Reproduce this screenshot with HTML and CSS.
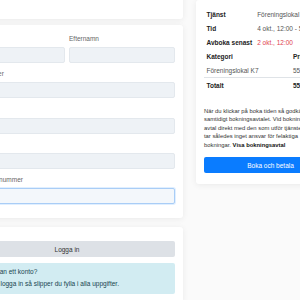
FILE: index.html
```html
<!DOCTYPE html>
<html lang="sv">
  <head>
    <meta charset="UTF-8" />
    <meta name="viewport" content="width=device-width, initial-scale=1.0" />
    <title>Boka lokal</title>
    <link rel="stylesheet" href="styles.css">
  </head>
  <body>
    <div class="page">
      <div class="main">
        <div class="card card-top"></div>

        <!-- Kontaktuppgifter -->
        <div class="card form-card">
          <div class="row-2">
            <div class="field">
              <label>Förnamn</label>
              <input class="input" type="text" />
            </div>
            <div class="field">
              <label>Efternamn</label>
              <input class="input" type="text" />
            </div>
          </div>
          <div class="field">
            <label>Telefonnummer</label>
            <input class="input" type="text" />
          </div>
          <div class="field">
            <label>E-post</label>
            <input class="input" type="text" />
          </div>
          <div class="field">
            <label>Förening</label>
            <input class="input" type="text" />
          </div>
          <div class="field">
            <label>Organisationsnummer</label>
            <input class="input input-focus" type="text" />
          </div>
        </div>

        <div class="card login-card">
          <button class="btn-light">Logga in</button>
          <div class="alert">
            Har du redan ett konto?<br />
            Då kan du logga in så slipper du fylla i alla uppgifter.
          </div>
        </div>
      </div>

      <!-- Sammanfattning -->
      <aside class="card summary">
        <table class="info">
          <tr>
            <th>Tjänst</th>
            <td>Föreningslokal K7</td>
          </tr>
          <tr>
            <th>Tid</th>
            <td>4 okt., 12:00 - 5 okt., 12:00</td>
          </tr>
          <tr>
            <th>Avboka senast</th>
            <td class="red">2 okt., 12:00</td>
          </tr>
        </table>
        <table class="prices">
          <tr>
            <th>Kategori</th>
            <th>Pris</th>
          </tr>
          <tr>
            <td>Föreningslokal K7</td>
            <td>550 kr</td>
          </tr>
          <tr class="total">
            <th>Totalt</th>
            <th>550 kr</th>
          </tr>
        </table>
        <p class="terms">
          När du klickar på boka tiden så godkänner du<br />
          samtidigt bokningsavtalet. Vid bokning ingår du<br />
          avtal direkt med den som utför tjänsten.<br />
          tar således inget ansvar för felaktiga<br />
          bokningar. <b>Visa bokningsavtal</b>
        </p>
        <button class="btn-primary">Boka och betala</button>
      </aside>
    </div>
  </body>
</html>
```

FILE: styles.css
```css
:root {
  --bg-color: #fafafa;
  --card-bg: #ffffff;
  --text-color: #222;
  --muted-color: #666;
  --input-bg: #eef2f6;
  --input-border: #e3e8ed;
  --accent-color: #0a7cff;
  --danger-color: #e0414f;
  --border-color: #dfe3e7;
}
body {
  margin: 0;
  background: var(--bg-color);
  color: var(--text-color);
  font-family: "Liberation Sans", Arial, sans-serif;
  font-size: 6.5px;
  overflow: hidden;
}

.page {
  display: flex;
  align-items: flex-start;
  gap: 13px;
  margin-left: -49px;
}
.main {
  width: 232px;
  flex: none;
  display: flex;
  flex-direction: column;
  margin-top: -20px;
}
.card {
  background: var(--card-bg);
  border-radius: 3px;
  box-shadow: 0 1px 6px rgba(0, 0, 0, 0.07);
}
.card-top {
  height: 39px;
  margin-bottom: 6px;
}

/* Form */
.form-card {
  padding: 10px 8px 14px;
  margin-bottom: 9px;
}
.row-2 {
  display: grid;
  grid-template-columns: 1fr 1fr;
  gap: 4px;
}
.field {
  margin-bottom: 7.25px;
}
.form-card > .field:last-child {
  margin-bottom: 0;
}
.field label {
  display: block;
  line-height: 8px;
  margin-bottom: 4px;
  color: var(--muted-color);
  white-space: nowrap;
}
.input {
  display: block;
  box-sizing: border-box;
  width: 100%;
  height: 16px;
  margin: 0;
  padding: 0 4px;
  border: 1px solid var(--input-border);
  border-radius: 2px;
  background: var(--input-bg);
  font: inherit;
  outline: none;
}
.input-focus {
  background: #f3f7fb;
  border-color: #a9cdf6;
  box-shadow: 0 0 0 1px rgba(0, 123, 255, 0.12);
}

/* Login */
.login-card {
  padding: 14px 8px 8px;
}
.btn-light {
  display: block;
  width: 100%;
  height: 16px;
  margin-bottom: 6px;
  border: none;
  border-radius: 2px;
  background: #dde1e6;
  color: #333;
  font: inherit;
}
.alert {
  background: #d2ecf2;
  color: #17454f;
  border-radius: 2px;
  padding: 3px 10px 4px;
  line-height: 12px;
  white-space: nowrap;
}

/* Summary */
.summary {
  width: 149px;
  flex: none;
  box-sizing: border-box;
  padding: 7px 8px 11px;
}
.info,
.prices {
  width: 100%;
  border-collapse: collapse;
}
.info th,
.info td,
.prices th,
.prices td {
  height: 14px;
  padding: 0 2.5px;
  text-align: left;
  white-space: nowrap;
  vertical-align: middle;
}
.info th {
  width: 44.5px;
  font-weight: bold;
}
.info td,
.prices td {
  color: #555;
}
.prices th:first-child,
.prices td:first-child {
  width: 81.5px;
}
.prices .total th {
  border-top: 1px solid var(--border-color);
}
.red {
  color: var(--danger-color) !important;
}
.terms {
  margin: 14.75px 0 7.75px;
  font-size: 5.85px;
  line-height: 8.5px;
  color: #333;
  white-space: nowrap;
}
.terms b {
  color: #111;
}
.btn-primary {
  display: block;
  width: 100%;
  height: 16px;
  border: none;
  border-radius: 2px;
  background: var(--accent-color);
  color: #fff;
  font: inherit;
}
```
